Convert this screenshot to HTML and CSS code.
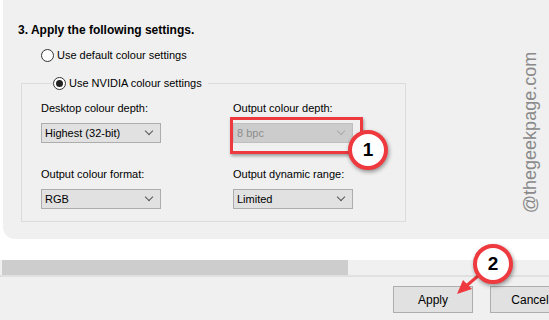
FILE: index.html
```html
<!DOCTYPE html>
<html lang="en">
<head>
    <meta charset="UTF-8">
    <meta name="viewport" content="width=device-width, initial-scale=1.0">
    <title>Change resolution</title>
    <link rel="stylesheet" href="styles.css">
</head>
<body>

    <div class="panel">
        <h3 class="step">3. Apply the following settings.</h3>

        <label class="radio">
            <span class="dot"></span>
            Use default colour settings
        </label>

        <!-- NVIDIA colour settings group -->
        <fieldset class="group">
            <legend>
                <label class="radio">
                    <span class="dot on"></span>
                    Use NVIDIA colour settings
                </label>
            </legend>

            <div class="grid">
                <div class="field">
                    <span class="caption">Desktop colour depth:</span>
                    <div class="select">Highest (32-bit)<span class="chev"></span></div>
                </div>
                <div class="field">
                    <span class="caption">Output colour depth:</span>
                    <div class="select disabled">8 bpc<span class="chev"></span></div>
                </div>
                <div class="field">
                    <span class="caption">Output colour format:</span>
                    <div class="select">RGB<span class="chev"></span></div>
                </div>
                <div class="field">
                    <span class="caption">Output dynamic range:</span>
                    <div class="select">Limited<span class="chev"></span></div>
                </div>
            </div>
        </fieldset>

        <div class="watermark">@thegeekpage.com</div>
    </div>

    <div class="scrollbar"><div class="thumb"></div></div>

    <div class="footer">
        <button class="btn">Apply</button>
        <button class="btn">Cancel</button>
    </div>

    <!-- Callouts -->
    <div class="mark box"></div>
    <div class="mark num one">1</div>
    <svg class="mark arrow" width="40" height="30" viewBox="0 0 40 30">
        <line x1="30" y1="4" x2="10" y2="21" stroke="#ee3a3f" stroke-width="3"/>
        <polygon points="2,28 8,14 17,23" fill="#ee3a3f"/>
    </svg>
    <div class="mark num two">2</div>

</body>
</html>
```

FILE: styles.css
```css
body {
    margin: 0;
    width: 549px;
    height: 320px;
    overflow: hidden;
    background-color: white;
    font-family: "Liberation Sans", Arial, sans-serif;
    font-size: 11px;
    color: black;
    position: relative;
}

.panel {
    margin-left: 3px;
    height: 239px;
    box-sizing: border-box;
    padding-top: 22px;
    background-color: #f0f0f0;
    border-bottom-left-radius: 12px;
    position: relative;
}

.step {
    margin: 0 0 9px 15px;
    font-size: 12px;
    line-height: 16px;
}

.radio {
    display: flex;
    align-items: center;
    gap: 3px;
    height: 16px;
    margin-left: 38px;
}

.dot {
    width: 11px;
    height: 11px;
    border: 1px solid #333;
    border-radius: 50%;
    background-color: white;
    position: relative;
}

.dot.on::after {
    content: "";
    position: absolute;
    left: 2px;
    top: 2px;
    width: 7px;
    height: 7px;
    border-radius: 50%;
    background-color: #222;
}

.group {
    margin: 12px 0 0 18px;
    padding: 9px 0 0 19px;
    width: 385px;
    height: 147px;
    box-sizing: border-box;
    border: 1px solid #dcdcdc;
    border-radius: 0;
}

.group legend {
    padding: 0 6px 0 0;
    margin-left: 12px;
}

.group legend .radio {
    margin-left: 0;
}

.grid {
    display: grid;
    grid-template-columns: 192px 150px;
    row-gap: 23px;
}

.field {
    display: flex;
    flex-direction: column;
    gap: 7px;
}

.caption {
    line-height: 16px;
}

.select {
    width: 120px;
    height: 20px;
    box-sizing: border-box;
    border: 1px solid #adadad;
    background-color: #e1e1e1;
    padding-left: 3px;
    line-height: 18px;
    position: relative;
}

.select.disabled {
    background-color: #cccccc;
    border-color: #bfbfbf;
    color: #8d8d8d;
}

.chev {
    position: absolute;
    right: 8px;
    top: 4px;
    width: 5px;
    height: 5px;
    border-right: 1px solid #555;
    border-bottom: 1px solid #555;
    transform: rotate(45deg);
}

.select.disabled .chev {
    border-color: #aaa;
}

.watermark {
    position: absolute;
    left: 440px;
    top: 122px;
    width: 174px;
    line-height: 21px;
    transform: rotate(-90deg);
    font-family: "Liberation Sans", Arial, sans-serif;
    font-size: 18px;
    color: #8a8a8a;
    text-align: center;
}

.scrollbar {
    margin-top: 21px;
    height: 15px;
    background-color: #f0f0f0;
    border-bottom: 2px solid #e0e0e0;
    padding-left: 2px;
}

.thumb {
    width: 346px;
    height: 15px;
    background-color: #cdcdcd;
}

.footer {
    height: 43px;
    background-color: #f0f0f0;
    display: flex;
    gap: 17px;
    padding: 9px 0 0 393px;
    box-sizing: border-box;
}

.btn {
    flex: none;
    width: 80px;
    height: 27px;
    border: 1px solid #adadad;
    background-color: #e1e1e1;
    font-family: "Liberation Sans", Arial, sans-serif;
    font-size: 12px;
    padding: 0;
}

.mark {
    position: absolute;
}

.box {
    left: 230px;
    top: 117px;
    width: 127px;
    height: 31px;
    border: 3px solid #ee3a3f;
    box-shadow: 1px 2px 3px rgba(0, 0, 0, 0.35);
}

.num {
    width: 32px;
    height: 32px;
    border: 4px solid #ee3a3f;
    border-radius: 50%;
    background-color: white;
    box-shadow: 1px 2px 4px rgba(0, 0, 0, 0.4);
    font-family: "Liberation Sans", Arial, sans-serif;
    font-weight: bold;
    font-size: 19px;
    line-height: 32px;
    text-align: center;
}

.one {
    left: 348px;
    top: 130px;
}

.two {
    left: 473px;
    top: 244px;
}

.arrow {
    left: 455px;
    top: 266px;
}
```
